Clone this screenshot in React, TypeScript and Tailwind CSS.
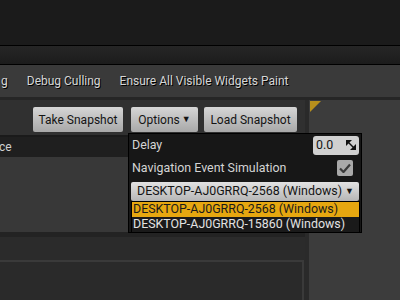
import React from "react";

function SpinIcon() {
  return (
    <svg width="10" height="10" viewBox="0 0 10 10">
      <polygon points="0,0 6,0 0,6" fill="#111" />
      <polygon points="10,10 4,10 10,4" fill="#111" />
      <line x1="1.5" y1="1.5" x2="8.5" y2="8.5" stroke="#111" strokeWidth="1.4" />
    </svg>
  );
}

function Check() {
  return (
    <svg width="12" height="10" viewBox="0 0 12 10">
      <path d="M1 5.5 L4.5 9 L11 1.5" fill="none" stroke="#3a3a3a" strokeWidth="2.2" />
    </svg>
  );
}

function Btn({ children, w }: { children: React.ReactNode; w: string }) {
  return (
    <div
      className={`${w} h-[25px] rounded-[2px] bg-gradient-to-b from-[#d6d6d6] to-[#a8a8a8] text-[#141414] text-[12px] flex items-center justify-center`}
    >
      {children}
    </div>
  );
}

export default function App() {
  return (
    <div className="relative w-[400px] h-[300px] overflow-hidden bg-[#1b1b1b] font-['Roboto',sans-serif] select-none">
      <div className="h-[45px] bg-[#1b1b1b]" />
      <div className="h-px bg-black" />
      <div className="h-[18px] bg-gradient-to-b from-[#262626] to-[#1c1c1c]" />
      <div className="h-px bg-black" />
      <div className="h-[32px] bg-[#3a3a3a] flex items-center text-[12px] text-[#d6d6d6] [text-shadow:1px_1px_0_#000]">
        <span className="ml-[1px]">g</span>
        <span className="ml-[19px]">Debug Culling</span>
        <span className="ml-[19px]">Ensure All Visible Widgets Paint</span>
      </div>
      <div className="h-[3px] bg-[#262626]" />
      <div className="flex h-[200px]">
        <div className="w-[305px] flex flex-col bg-[#2f2f2f]">
          <div className="h-[35px] flex items-start pt-[7px] pl-[33px] gap-[8px] bg-[#303030]">
            <Btn w="w-[90px]">Take Snapshot</Btn>
            <Btn w="w-[67px]">
              Options
              <span className="ml-[2px] text-[9px]">▼</span>
            </Btn>
            <div className="-ml-[2px]">
              <Btn w="w-[93px]">Load Snapshot</Btn>
            </div>
          </div>
          <div className="h-[2px] bg-[#1a1a1a]" />
          <div className="h-[20px] bg-[#1f1f1f] flex items-center text-[12px] text-[#d0d0d0] pl-0">
            <span className="ml-[-1px]">ce</span>
          </div>
          <div className="h-[75px] bg-[#383838]" />
          <div className="h-[5px] bg-[#232323]" />
          <div className="h-[23px] bg-[#2b2b2b]" />
          <div className="flex-1 flex bg-[#2a2a2a]">
            <div className="w-[304px] border-t-2 border-r-2 border-[#3a3a3a] bg-[#2a2a2a]" />
          </div>
        </div>
        <div className="w-[4px] bg-[#2a2a2a]" />
        <div className="flex-1 bg-[#3c3c3c] pt-[1px] pl-[1px]">
          <svg width="11" height="11" viewBox="0 0 11 11">
            <polygon points="0,0 11,0 0,11" fill="#b8901c" />
          </svg>
        </div>
      </div>

      <div className="absolute left-[128px] top-[133px] w-[234px] h-[100px] bg-[#171717] border border-black text-[12.4px] text-[#d4d4d4]">
        <div className="h-[22px] flex items-center justify-between pl-[3px] pr-[2px]">
          <span>Delay</span>
          <div className="w-[46px] h-[19px] rounded-[3px] bg-[#d0d0d0] text-[#141414] flex items-center justify-between pl-[3px] pr-[3px]">
            <span>0.0</span>
            <SpinIcon />
          </div>
        </div>
        <div className="h-[24px] flex items-center justify-between pl-[3px] pr-[8px]">
          <span>Navigation Event Simulation</span>
          <div className="w-[16px] h-[16px] rounded-[2px] bg-[#a9a9a9] flex items-center justify-center">
            <Check />
          </div>
        </div>
        <div className="ml-[2px] w-[228px] h-[19px] mt-[2px] rounded-[2px] bg-gradient-to-b from-[#e2e2e2] to-[#b6b6b6] text-[#141414] flex items-center pl-[6px]">
          <span>DESKTOP-AJ0GRRQ-2568 (Windows)</span>
          <span className="ml-[3px] text-[9px]">▼</span>
        </div>
        <div className="ml-[2px] w-[229px] border border-black bg-[#1a1a1a]">
          <div className="h-[15px] bg-[#e6a710] text-[#1a1a1a] flex items-center pl-[1px]">
            DESKTOP-AJ0GRRQ-2568 (Windows)
          </div>
          <div className="h-[15px] text-[#e2e2e2] flex items-center pl-[1px]">
            DESKTOP-AJ0GRRQ-15860 (Windows)
          </div>
        </div>
      </div>
    </div>
  );
}
